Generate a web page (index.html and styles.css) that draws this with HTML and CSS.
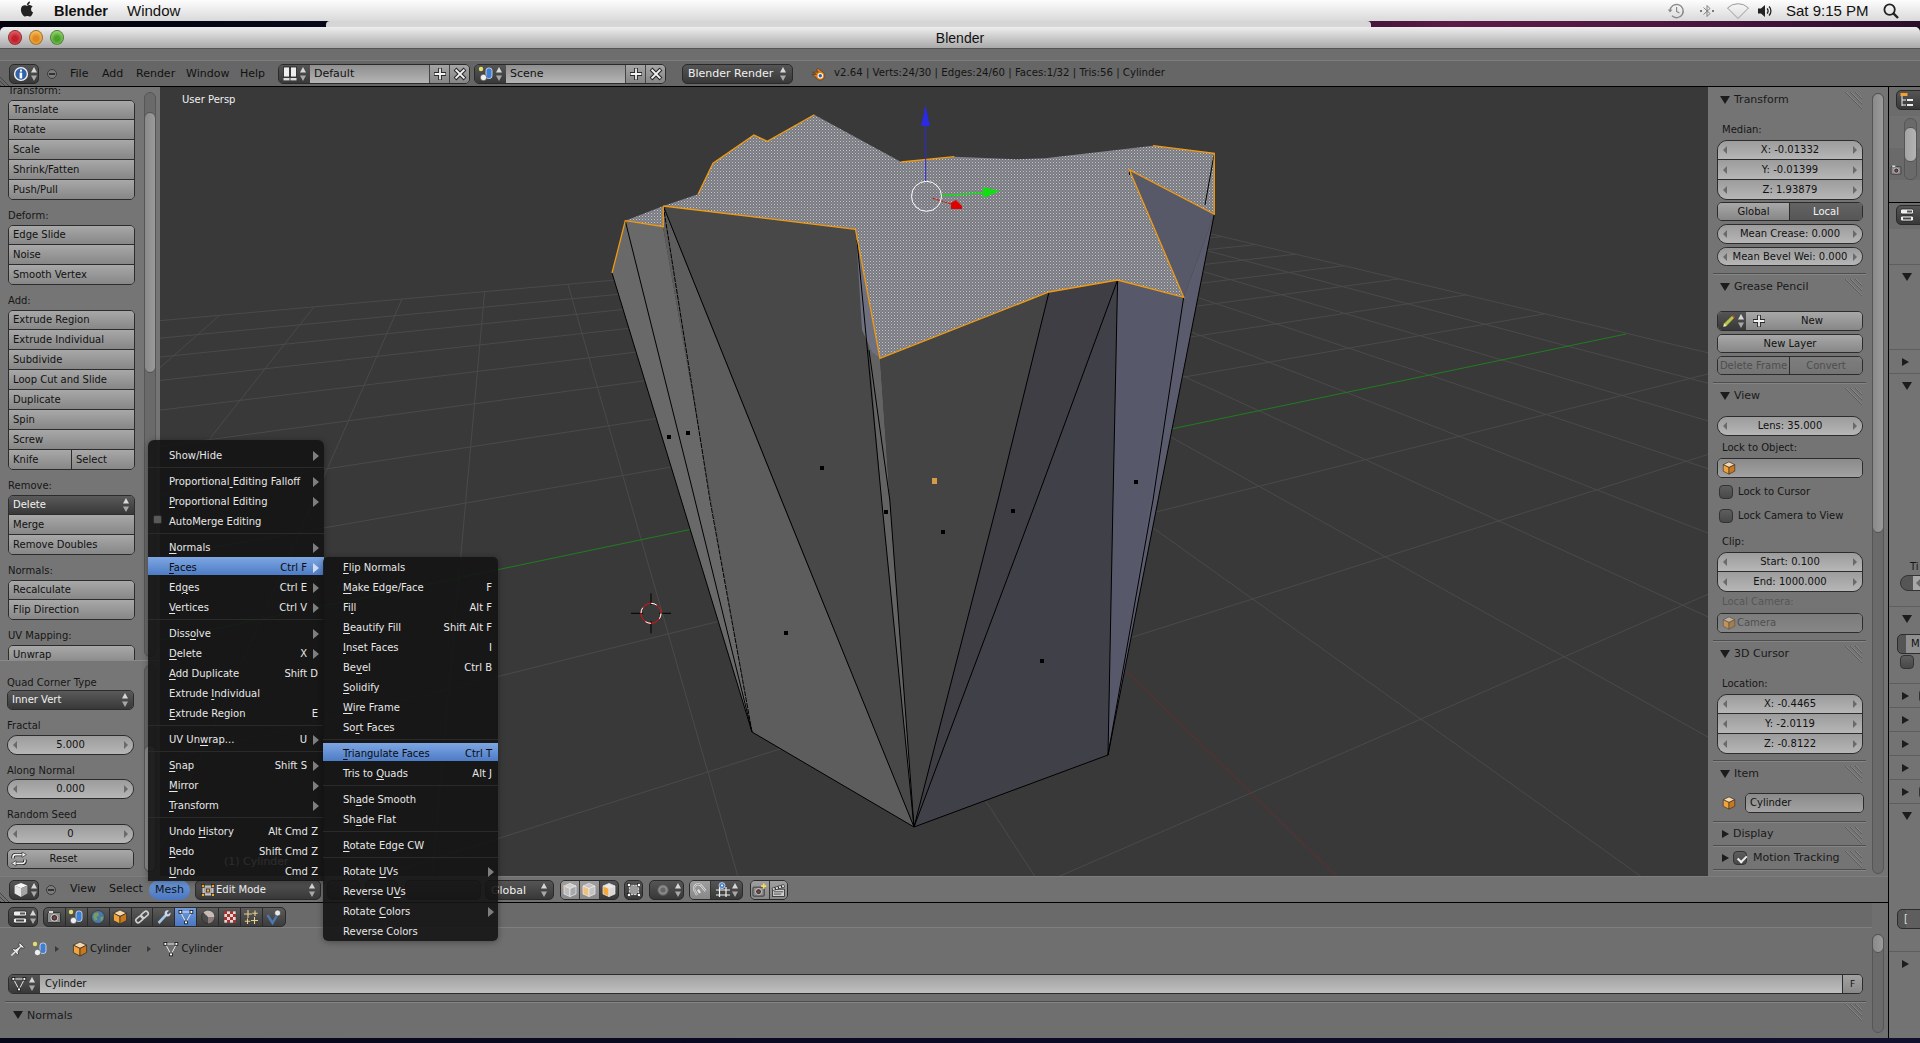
FILE: index.html
```html
<!DOCTYPE html>
<html lang="en">
<head>
<meta charset="utf-8">
<title>Blender</title>
<link rel="stylesheet" href="styles.css">
</head>
<body>
<svg class="defs" width="0" height="0">
  <defs>
    <symbol id="i-arrows" viewBox="0 0 8 16"><polygon points="4,1 7,6.5 1,6.5" fill="#d8d8d8"/><polygon points="4,15 7,9.5 1,9.5" fill="#a8a8a8"/></symbol>
    <symbol id="i-info" viewBox="0 0 16 16"><circle cx="8" cy="8" r="6.4" fill="#2f62a8" stroke="#f2f2f2" stroke-width="1.4"/><rect x="7" y="3.6" width="2" height="2" fill="#fff"/><rect x="6.6" y="6.6" width="2.6" height="5.8" fill="#fff"/></symbol>
    <symbol id="i-layout" viewBox="0 0 16 16"><rect x="1.5" y="1" width="6" height="10" fill="#eee" stroke="#222" stroke-width=".8"/><rect x="8.5" y="1" width="6" height="10" fill="#eee" stroke="#222" stroke-width=".8"/><rect x="1.5" y="12" width="6" height="2.4" fill="#ddd"/><rect x="8.5" y="12" width="6" height="2.4" fill="#ddd"/></symbol>
    <symbol id="i-scene" viewBox="0 0 16 16"><circle cx="3" cy="3" r="2.2" fill="#e6e06a"/><rect x="8" y="2" width="6" height="10.5" rx="2.6" fill="#3f7ed0" stroke="#dfe8f5" stroke-width=".8"/><circle cx="5.5" cy="11.5" r="3.2" fill="#f0f0f0" stroke="#333" stroke-width=".6"/></symbol>
    <symbol id="i-plus" viewBox="0 0 16 16"><path d="M8 2V14M2 8H14" stroke="#2a2a2a" stroke-width="3.8" fill="none"/><path d="M8 2.6V13.4M2.6 8H13.4" stroke="#f2f2f2" stroke-width="1.8" fill="none"/></symbol>
    <symbol id="i-x" viewBox="0 0 16 16"><path d="M3 3L13 13M13 3L3 13" stroke="#2a2a2a" stroke-width="4" fill="none"/><path d="M3.6 3.6L12.4 12.4M12.4 3.6L3.6 12.4" stroke="#f2f2f2" stroke-width="2" fill="none"/></symbol>
    <symbol id="i-blender" viewBox="0 0 16 16"><path d="M7 2.5L13 7A4.6 4.6 0 1 1 4.8 11L1 8.4H5.5L1.8 6.2H7.2L5.5 3.4Z" fill="#e87d0d" stroke="#3a2a1a" stroke-width=".5"/><circle cx="9.3" cy="9.7" r="2.8" fill="#f4f4f4"/><circle cx="9.3" cy="9.7" r="1.7" fill="#2f62a8"/></symbol>
    <symbol id="i-cube" viewBox="0 0 16 16"><g stroke="#2a2a2a" stroke-width=".7" stroke-linejoin="round"><polygon points="8,1 14.6,4.2 8,7.4 1.4,4.2" fill="#f9d6a8"/><polygon points="1.4,4.2 8,7.4 8,15 1.4,11.6" fill="#f2a33a"/><polygon points="14.6,4.2 8,7.4 8,15 14.6,11.6" fill="#c9781d"/></g></symbol>
    <symbol id="i-mesh" viewBox="0 0 16 16"><polygon points="2.5,3 13.5,3 8,13.6" fill="none" stroke="#e8e8e8" stroke-width="1"/><g fill="#fff" stroke="#111" stroke-width=".8"><rect x="1" y="1.5" width="2.8" height="2.8"/><rect x="12" y="1.5" width="2.8" height="2.8"/><rect x="6.6" y="12" width="2.8" height="2.8"/></g></symbol>
    <symbol id="i-props" viewBox="0 0 16 16"><rect x="1.5" y="2" width="13" height="5" rx="1.5" fill="#eee" stroke="#222" stroke-width=".8"/><rect x="8" y="3.5" width="5" height="2" fill="#555"/><rect x="1.5" y="9" width="13" height="5" rx="1.5" fill="#eee" stroke="#222" stroke-width=".8"/><rect x="4" y="10.5" width="8" height="2" fill="#444"/></symbol>
    <symbol id="i-outliner" viewBox="0 0 16 16"><rect x="1.5" y="1" width="7" height="3" fill="#f3a030"/><path d="M3 4V14M3 8H7M3 13H7" stroke="#eee" fill="none"/><rect x="8" y="7" width="6" height="2" fill="#eee"/><rect x="8" y="12" width="6" height="2" fill="#eee"/></symbol>
    <symbol id="i-cam" viewBox="0 0 16 16"><rect x="1.5" y="3.6" width="13" height="10" rx="1" fill="#8c8c8c" stroke="#222" stroke-width=".8"/><rect x="3" y="2" width="4" height="2" fill="#ddd"/><circle cx="8.4" cy="8.8" r="3.4" fill="#3a3a3a" stroke="#ddd" stroke-width=".9"/><circle cx="8.4" cy="8.8" r="1.2" fill="#b33"/></symbol>
    <symbol id="i-world" viewBox="0 0 16 16"><circle cx="8" cy="8" r="6.5" fill="#4a78a8" stroke="#333" stroke-width=".7"/><path d="M4 4.5L8 3.2L9 6L6.5 8L7.5 11L5 11.5L3 8Z" fill="#7c9c5c"/><path d="M10.5 8L13.4 7.8L12.6 11L10.6 12Z" fill="#7c9c5c"/></symbol>
    <symbol id="i-link" viewBox="0 0 16 16"><g fill="none" stroke="#d0d0d0" stroke-width="1.6"><rect x="1.5" y="8" width="8" height="4.6" rx="2.3" transform="rotate(-40 5.5 10.3)"/><rect x="6.6" y="3.4" width="8" height="4.6" rx="2.3" transform="rotate(-40 10.6 5.7)"/></g></symbol>
    <symbol id="i-wrench" viewBox="0 0 16 16"><path d="M2.6 14L9.6 6.4" stroke="#a6c6e8" stroke-width="2.6" fill="none"/><path d="M9 7.2L8.6 4A3 3 0 0 1 13 1.6L10.8 4L12 5.4L14.4 3.4A3 3 0 0 1 12 7.4Z" fill="#c8d8ea"/></symbol>
    <symbol id="i-material" viewBox="0 0 16 16"><circle cx="8" cy="8" r="6.4" fill="#4a4a4a" stroke="#2a2a2a" stroke-width=".7"/><path d="M3.4 3.6A6.4 6.4 0 0 1 14.4 8L8 8Z" fill="#c9bcb6"/><path d="M14.4 8A6.4 6.4 0 0 1 8 14.4L8 8Z" fill="#8a7c78"/></symbol>
    <symbol id="i-texture" viewBox="0 0 16 16"><rect x="2" y="2" width="12" height="12" fill="#e2d6d6" stroke="#444" stroke-width=".6"/><path d="M2 2h3v3H2zM8 2h3v3H8zM5 5h3v3H5zM11 5h3v3h-3zM2 8h3v3H2zM8 8h3v3H8zM5 11h3v3H5zM11 11h3v3h-3z" fill="#a8322e"/></symbol>
    <symbol id="i-particles" viewBox="0 0 16 16"><g stroke="#e8cf8a" stroke-width="1.1" fill="none"><path d="M5 1V9M1 5H9"/><path d="M12 1.5V7M9.3 4.2H14.7"/><path d="M4.5 9.5V15M1.8 12.2H7.2"/><path d="M11.5 8V15M8 11.5H15"/></g></symbol>
    <symbol id="i-physics" viewBox="0 0 16 16"><path d="M1.5 6L6.5 14L13 3" fill="none" stroke="#4a78b0" stroke-width="2.4"/><circle cx="11.6" cy="4" r="3" fill="#e8e8e8" stroke="#333" stroke-width=".6"/></symbol>
    <symbol id="i-pin" viewBox="0 0 16 16"><path d="M9.6 1.5L14.5 6.4L13 7.2L10.8 6.6L8 10.8L8.6 13L7.4 13.8L2.4 8.8L3.2 7.6L5.4 8.2L9.4 5.4L8.8 3.2Z" fill="#e8e8e8" stroke="#222" stroke-width=".7"/><path d="M5 11L1.4 14.6" stroke="#e8e8e8" stroke-width="1.4"/></symbol>
    <symbol id="i-pencil" viewBox="0 0 16 16"><path d="M1.4 14.6L2.4 10.6L11.4 1.8L14.2 4.6L5.4 13.6Z" fill="#b8c64a" stroke="#333" stroke-width=".6"/><path d="M11.4 1.8L14.2 4.6L15 3.6L12.6 1Z" fill="#e03a2a"/><path d="M1.4 14.6L2.4 10.6L5.4 13.6Z" fill="#f3e6c0"/></symbol>
    <symbol id="i-view3d" viewBox="0 0 16 16"><polygon points="8,1 14.4,3.6 8,6.2 1.6,3.6" fill="#f6f6f6"/><polygon points="1.6,3.6 8,6.2 8,15 1.6,11.6" fill="#e4e4e4"/><polygon points="14.4,3.6 8,6.2 8,15 14.4,11.6" fill="#a4a4a4"/></symbol>
    <symbol id="i-edit" viewBox="0 0 16 16"><polygon points="3,4 13,4 13,13 3,13" fill="#a8a8a8" stroke="#eee" stroke-width=".8"/><g fill="#f6a93a" stroke="#222" stroke-width=".7"><rect x="1.5" y="2.5" width="3" height="3"/><rect x="11.5" y="2.5" width="3" height="3"/><rect x="1.5" y="11.5" width="3" height="3"/><rect x="11.5" y="11.5" width="3" height="3"/><rect x="6.5" y="7" width="3" height="3"/></g></symbol>
    <symbol id="i-refresh" viewBox="0 0 16 16"><g fill="none" stroke="#222" stroke-width="3.4"><path d="M2 7.4V6A2.6 2.6 0 0 1 4.6 3.6H12.4"/><path d="M14 8.6V10A2.6 2.6 0 0 1 11.4 12.4H3.6"/></g><g fill="none" stroke="#f0f0f0" stroke-width="1.6"><path d="M2 7.4V6A2.6 2.6 0 0 1 4.6 3.6H12"/><path d="M14 8.6V10A2.6 2.6 0 0 1 11.4 12.4H4"/></g><polygon points="11,1 15.4,3.6 11,6.4" fill="#f0f0f0" stroke="#222" stroke-width=".6"/><polygon points="5,9.6 .6,12.4 5,15" fill="#f0f0f0" stroke="#222" stroke-width=".6"/></symbol>
    <symbol id="i-shade1" viewBox="0 0 16 16"><g fill="#cfcfcf" stroke="#eee" stroke-width=".7"><polygon points="8,1.4 14,4 8,6.6 2,4"/><polygon points="2,4 8,6.6 8,14.6 2,12" fill="#bdbdbd"/><polygon points="14,4 8,6.6 8,14.6 14,12" fill="#a8a8a8"/></g><rect x="1.4" y="3" width="2" height="2" fill="#f0c080"/></symbol>
    <symbol id="i-shade2" viewBox="0 0 16 16"><g fill="#c4c4c4" stroke="#eee" stroke-width=".7"><polygon points="8,1.4 14,4 8,6.6 2,4"/><polygon points="2,4 8,6.6 8,14.6 2,12" fill="#f0c080"/><polygon points="14,4 8,6.6 8,14.6 14,12"/></g></symbol>
    <symbol id="i-shade3" viewBox="0 0 16 16"><g stroke="#eee" stroke-width=".7"><polygon points="8,1.4 14,4 8,6.6 2,4" fill="#e8e8e8"/><polygon points="2,4 8,6.6 8,14.6 2,12" fill="#f6a93a"/><polygon points="14,4 8,6.6 8,14.6 14,12" fill="#d8d8d8"/></g></symbol>
    <symbol id="i-selbox" viewBox="0 0 16 16"><rect x="3.4" y="3.4" width="9.2" height="9.2" fill="#9a9a9a" stroke="#eee" stroke-width=".8" stroke-dasharray="2 1"/><g fill="#fff" stroke="#111" stroke-width=".6"><rect x="1.5" y="1.5" width="3" height="3"/><rect x="11.5" y="1.5" width="3" height="3"/><rect x="1.5" y="11.5" width="3" height="3"/><rect x="11.5" y="11.5" width="3" height="3"/></g></symbol>
    <symbol id="i-circ" viewBox="0 0 16 16"><circle cx="8" cy="8" r="5.4" fill="#8a8a8a" stroke="#555" stroke-width="1.2"/><circle cx="8" cy="8" r="2.6" fill="#666"/></symbol>
    <symbol id="i-magnet" viewBox="0 0 16 16"><path d="M5 13L2.8 8.8A4 4 0 0 1 9.6 4L13.6 9M8 11L6 7.6" fill="none" stroke="#e2e2e2" stroke-width="2.2"/><path d="M5 13L2.8 8.8A4 4 0 0 1 9.6 4L13.6 9" fill="none" stroke="#444" stroke-width=".5"/></symbol>
    <symbol id="i-snap" viewBox="0 0 16 16"><path d="M4.5 5V15M11 5V15M1 8H15M1 13H15" stroke="#f2f2f2" stroke-width="1.2" fill="none"/><circle cx="7" cy="3.6" r="3" fill="#3f7ed0" stroke="#eee" stroke-width=".7"/><circle cx="7" cy="3.6" r="1" fill="#fff"/></symbol>
    <symbol id="i-render" viewBox="0 0 16 16"><rect x="1" y="4.4" width="12" height="9.6" rx="1" fill="#8c8c8c" stroke="#222" stroke-width=".8"/><circle cx="7" cy="9.2" r="3.2" fill="#3a3a3a" stroke="#ddd" stroke-width=".9"/><circle cx="7" cy="9.2" r="1.1" fill="#b33"/><path d="M12.5 .6V6M9.8 3.3H15.2" stroke="#f6dc60" stroke-width="1.8"/></symbol>
    <symbol id="i-clap" viewBox="0 0 16 16"><rect x="1.5" y="6.6" width="13" height="7.8" fill="#cfcfcf" stroke="#222" stroke-width=".8"/><path d="M3 9.4H13M3 11.8H11" stroke="#444"/><polygon points="1,5.6 13.6,1.6 14.6,4.4 2,8" fill="#e8e8e8" stroke="#222" stroke-width=".7"/><path d="M4 4.6L5 7.2M7.4 3.6L8.4 6.2M10.8 2.6L11.8 5.2" stroke="#222" stroke-width="1.2"/></symbol>
    <symbol id="i-hatch" viewBox="0 0 17 17"><g fill="none" stroke="#5c5c5c"><path d="M0 0L17 17M5 0L17 12M10 0L17 7"/></g><g fill="none" stroke="#8e8e8e" stroke-width=".7"><path d="M1 0L17 16M6 0L17 11M11 0L17 6"/></g></symbol>
  </defs>
</svg>

<div class="desktop">
  <header class="macbar">
    <svg class="apple" viewBox="0 0 24 24"><path d="M18.71 19.5c-.83 1.24-1.71 2.45-3.05 2.47-1.34.03-1.77-.79-3.29-.79-1.53 0-2 .77-3.27.82-1.31.05-2.3-1.32-3.14-2.53C4.25 17 2.94 12.45 4.7 9.39c.87-1.52 2.43-2.48 4.12-2.51 1.28-.02 2.5.87 3.29.87.78 0 2.26-1.07 3.81-.91.65.03 2.47.26 3.64 1.98-.09.06-2.17 1.28-2.15 3.81.03 3.02 2.65 4.03 2.68 4.04-.03.07-.42 1.44-1.38 2.83M13 3.5c.73-.83 1.94-1.46 2.94-1.5.13 1.17-.34 2.35-1.04 3.19-.69.85-1.83 1.51-2.95 1.42-.15-1.15.41-2.35 1.05-3.11z"/></svg>
    <span class="mac-app">Blender</span>
    <span class="mac-item">Window</span>
    <span class="mac-fill"></span>
    <svg class="mac-ic tm" viewBox="0 0 18 18"><path d="M3 9A6.6 6.6 0 1 1 5 13.8" fill="none" stroke="#8a8a8a" stroke-width="1.4"/><path d="M.8 7.6L3 10.4L5.4 7.8Z" fill="#8a8a8a"/><path d="M9.6 5V9.4L12.4 11" fill="none" stroke="#8a8a8a" stroke-width="1.2"/></svg>
    <svg class="mac-ic bt" viewBox="0 0 18 18"><path d="M5.5 5.5L12 11.5L9 14.5V3.5L12 6.5L5.5 12.5" fill="none" stroke="#777" stroke-width=".9"/><circle cx="3" cy="9" r="1" fill="#555"/><circle cx="15" cy="9" r="1" fill="#555"/></svg>
    <svg class="mac-ic wifi" viewBox="0 0 24 18"><path d="M1.5 6A15 15 0 0 1 22.5 6L12 16.5Z" fill="none" stroke="#9a9a9a" stroke-width="1"/></svg>
    <svg class="mac-ic vol" viewBox="0 0 18 18"><path d="M2 6.5H5L9 3V15L5 11.5H2Z" fill="#222"/><path d="M11 6.5A3.4 3.4 0 0 1 11 11.5M13 4.6A6 6 0 0 1 13 13.4" fill="none" stroke="#222" stroke-width="1.3"/></svg>
    <span class="mac-clock">Sat 9:15 PM</span>
    <svg class="mac-ic search" viewBox="0 0 18 18"><circle cx="7.6" cy="7.6" r="5.2" fill="none" stroke="#222" stroke-width="1.8"/><path d="M11.4 11.4L16 16" stroke="#222" stroke-width="2.4"/></svg>
  </header>

  <div class="wall-strip"><div class="behind"></div></div>

  <main class="window">
    <div class="titlebar">
      <div class="lights"><i class="light red"></i><i class="light amber"></i><i class="light green"></i></div>
      <span class="title">Blender</span>
    </div>
    <div class="topstrip"></div>

    <div class="infohead">
      <div class="pill dark ed-info"><svg class="ic"><use href="#i-info"/></svg><svg class="arr"><use href="#i-arrows"/></svg></div>
      <i class="collapse"></i>
      <nav class="menus">
        <span class="m-file">File</span><span class="m-add">Add</span><span class="m-render">Render</span><span class="m-window">Window</span><span class="m-help">Help</span>
      </nav>
      <div class="idgroup"><div class="idicon"><svg class="ic"><use href="#i-layout"/></svg><svg class="arr"><use href="#i-arrows"/></svg></div><div class="idfield">Default</div><div class="idbtn"><svg class="ic"><use href="#i-plus"/></svg></div><div class="idbtn"><svg class="ic"><use href="#i-x"/></svg></div></div>
      <div class="idgroup second"><div class="idicon"><svg class="ic"><use href="#i-scene"/></svg><svg class="arr"><use href="#i-arrows"/></svg></div><div class="idfield">Scene</div><div class="idbtn"><svg class="ic"><use href="#i-plus"/></svg></div><div class="idbtn"><svg class="ic"><use href="#i-x"/></svg></div></div>
      <div class="pill dark engine"><span>Blender Render</span><svg class="arr"><use href="#i-arrows"/></svg></div>
      <svg class="ic logo"><use href="#i-blender"/></svg>
      <span class="stats">v2.64 | Verts:24/30 | Edges:24/60 | Faces:1/32 | Tris:56 | Cylinder</span>
    </div>

    <div class="work">
      <div class="leftcol">
        <section class="view3d">
          <div class="viewrow">
            <aside class="toolbar">
              <div class="tools">
                <div class="tools-col tools-shift">
                  <div class="lbl">Transform:</div>
                  <div class="grp"><div class="row">Translate</div><div class="row">Rotate</div><div class="row">Scale</div><div class="row">Shrink/Fatten</div><div class="row">Push/Pull</div></div>
                  <div class="lbl">Deform:</div>
                  <div class="grp"><div class="row">Edge Slide</div><div class="row">Noise</div><div class="row">Smooth Vertex</div></div>
                  <div class="lbl">Add:</div>
                  <div class="grp"><div class="row">Extrude Region</div><div class="row">Extrude Individual</div><div class="row">Subdivide</div><div class="row">Loop Cut and Slide</div><div class="row">Duplicate</div><div class="row">Spin</div><div class="row">Screw</div><div class="row split"><span>Knife</span><span>Select</span></div></div>
                  <div class="lbl">Remove:</div>
                  <div class="grp"><div class="row drop">Delete<svg class="arr"><use href="#i-arrows"/></svg></div><div class="row">Merge</div><div class="row">Remove Doubles</div></div>
                  <div class="lbl">Normals:</div>
                  <div class="grp"><div class="row">Recalculate</div><div class="row">Flip Direction</div></div>
                  <div class="lbl">UV Mapping:</div>
                  <div class="grp"><div class="row">Unwrap</div></div>
                </div>
                <div class="sbar sb-tools"><div class="sb-thumb"></div></div>
              </div>
              <div class="oper">
                <div class="tools-col oper-col">
                  <div class="lbl first">Quad Corner Type</div>
                  <div class="grp"><div class="row drop">Inner Vert<svg class="arr"><use href="#i-arrows"/></svg></div></div>
                  <div class="lbl">Fractal</div>
                  <div class="grp num"><div class="row nrow"><i class="al"></i><span>5.000</span><i class="ar"></i></div></div>
                  <div class="lbl tight">Along Normal</div>
                  <div class="grp num"><div class="row nrow"><i class="al"></i><span>0.000</span><i class="ar"></i></div></div>
                  <div class="lbl">Random Seed</div>
                  <div class="grp num"><div class="row nrow"><i class="al"></i><span>0</span><i class="ar"></i></div></div>
                  <div class="grp reset"><div class="row resetrow"><svg class="ic"><use href="#i-refresh"/></svg><span>Reset</span></div></div>
                </div>
                <div class="sbar sb-oper"><div class="sb-thumb"></div></div>
              </div>
            </aside>

            <div class="viewport">
              <svg class="scene" viewBox="160 87 1548 789" width="1548" height="789">
                <defs>
                  <pattern id="stipple" width="3" height="3" patternUnits="userSpaceOnUse"><rect width="3" height="3" fill="#7a7a82"/><rect width="1" height="1" fill="#c4c4ca"/><rect x="1.5" y="1.5" width="1" height="1" fill="#a8a8ae"/></pattern>
                </defs>
                <g id="grid" fill="none" stroke="#4a4a4a" stroke-width="1"></g>
                <g id="axes" fill="none"></g>
                <!-- faces -->
                <polygon points="612,273 625,221 663,227 752,732" fill="#696969"/>
                <polygon points="663,206 663,227 752,732 914,827 781,500" fill="#5d5d5d"/>
                <polygon points="663,206 855.5,229 880,358 881.6,500 914,827 781,500" fill="#484848"/>
                <polygon points="855.5,229 880,358 889.8,500 914,827 881.6,500 869,350" fill="#636363"/>
                <polygon points="880,358 1049,292 998,500 914,827 889.8,500" fill="#444444"/>
                <polygon points="1049,292 1117.6,280 1036.7,500 914,827 998,500" fill="#3e3e44"/>
                <polygon points="1117.6,280 1113,500 1108,755 914,827 1036.7,500" fill="#404049"/>
                <polygon points="1117.6,280 1183.7,297 1153,500 1108,755 1113,500" fill="#575869"/>
                <polygon points="1183.7,297 1214.3,214.3 1108,755" fill="#5a5b6d"/>
                <polygon points="1129.4,170 1214.3,214.3 1183.7,297" fill="#575868"/>
                <!-- selected top -->
                <polygon points="663.3,206 698,194.3 713,163.3 753.9,135 767.3,141.3 814.3,114.7 901.2,162 954.3,156.7 1016.3,159.3 1044.9,158.3 1153,145.7 1214.3,153.3 1214.3,214.3 1129.4,170 1183.7,297.3 1117.6,280 1049,292 880,358.3 855.5,229.3" fill="url(#stipple)"/>
                <polygon points="625.3,220.7 663.3,206 663.3,226.7" fill="url(#stipple)"/>
                <polygon points="856,232 880,358 872,352 862,330" fill="#6e7080"/>
                <!-- edges -->
                <g fill="none" stroke="#000" stroke-width="1">
                  <path d="M612,273L752,732L914,827L1108,755L1214.3,214"/>
                  <path d="M625.3,221L690,480L752,732"/>
                  <path d="M663.3,206L710,500L752,732" stroke-dasharray="5 1"/>
                  <path d="M663.3,206L781.6,500L914,827"/>
                  <path d="M857,240L881.6,500L914,827"/>
                  <path d="M869,350L889.8,500L914,827"/>
                  <path d="M1049,292L998,500L914,827"/>
                  <path d="M1117.6,280L1036.7,500L914,827"/>
                  <path d="M1117.6,280L1113,500L1108,755"/>
                  <path d="M1183.7,297L1153,500L1108,755"/>
                  <path d="M1214,155L1205,205"/>
                  <path d="M1129.4,170V175"/>
                </g>
                <g fill="none" stroke="#f09a10" stroke-width="1.3">
                  <path d="M663.3,206L855.5,229.3L880,358.3L1049,292L1117.6,280L1183.7,297.3L1129.4,170L1214.3,214.3L1214.3,153.3L1153,145.7"/>
                  <path d="M698,194.3L713,163.3L753.9,135L767.3,141.3L814.3,114.7"/>
                  <path d="M901.2,162L954.3,156.7"/>
                  <path d="M612,273L625.3,220.7L663.3,226.7L663.3,206"/>
                </g>
                <!-- face dots -->
                <g fill="#000">
                  <rect x="667" y="435" width="4" height="4"/><rect x="686" y="431" width="4" height="4"/><rect x="820" y="466" width="4" height="4"/><rect x="1134" y="480" width="4" height="4"/><rect x="884" y="510" width="4" height="4"/><rect x="941" y="530" width="4" height="4"/><rect x="1011" y="509" width="4" height="4"/><rect x="784" y="631" width="4" height="4"/><rect x="1040" y="659" width="4" height="4"/>
                </g>
                <rect x="932" y="478" width="5" height="6" fill="#d69a4c"/>
                <!-- manipulator -->
                <g>
                  <path d="M925.7,126V181" stroke="#2a2ae0" fill="none"/>
                  <polygon points="925.5,105 921,126 930,126" fill="#2a2ae0"/>
                  <path d="M941,195.7L985,192.8" stroke="#10e010" stroke-width="1.4" fill="none"/>
                  <polygon points="983,187 1000,191 983,198" fill="#10e010"/>
                  <path d="M932.7,198.3L951,204" stroke="#e01010" fill="none" stroke-dasharray="3 1"/>
                  <polygon points="951,203 956,200 962,206 962,209 951,209" fill="#e00000"/>
                  <circle cx="926.5" cy="196.3" r="15" fill="none" stroke="#fff"/>
                </g>
                <!-- 3d cursor -->
                <g>
                  <path d="M631,613.3H643M659,613.3H671M651,593.3V605M651,621V633.3" stroke="#000" fill="none"/>
                  <circle cx="651" cy="613.3" r="10" fill="none" stroke="#e01010"/>
                  <circle cx="651" cy="613.3" r="10" fill="none" stroke="#fff" stroke-dasharray="5.7 10"/>
                </g>
              </svg>
              <span class="persp">User Persp</span>
              <span class="objname">(1) Cylinder</span>
            </div>

            <aside class="npanel">
              <div class="np-main">
                <div class="np-sec">
                  <div class="np-head"><i class="tri-d"></i>Transform<svg class="hatch"><use href="#i-hatch"/></svg></div>
                  <div class="np-lbl lb8">Median:</div>
                  <div class="grp num"><div class="row nrow"><i class="al"></i><span>X: -0.01332</span><i class="ar"></i></div><div class="row nrow"><i class="al"></i><span>Y: -0.01399</span><i class="ar"></i></div><div class="row nrow"><i class="al"></i><span>Z: 1.93879</span><i class="ar"></i></div></div>
                  <div class="grp two h19 mt2"><div class="row seg"><span>Global</span><span class="on">Local</span></div></div>
                  <div class="grp num mt3"><div class="row nrow"><i class="al"></i><span>Mean Crease: 0.000</span><i class="ar"></i></div></div>
                  <div class="grp num h19 mt3"><div class="row nrow"><i class="al"></i><span>Mean Bevel Wei: 0.000</span><i class="ar"></i></div></div>
                </div>
                <div class="np-sec s-gp">
                  <div class="np-head"><i class="tri-d"></i>Grease Pencil<svg class="hatch"><use href="#i-hatch"/></svg></div>
                  <div class="grp mt12"><div class="row gp"><span class="gp-ic"><svg class="ic"><use href="#i-pencil"/></svg><svg class="arr"><use href="#i-arrows"/></svg></span><svg class="ic gp-plus"><use href="#i-plus"/></svg><span class="gp-new">New</span></div></div>
                  <div class="grp h19 mt3"><div class="row center">New Layer</div></div>
                  <div class="grp h19 mt3 disabled"><div class="row seg"><span>Delete Frame</span><span>Convert</span></div></div>
                </div>
                <div class="np-sec s-view">
                  <div class="np-head"><i class="tri-d"></i>View<svg class="hatch"><use href="#i-hatch"/></svg></div>
                  <div class="grp num mt8"><div class="row nrow"><i class="al"></i><span>Lens: 35.000</span><i class="ar"></i></div></div>
                  <div class="np-lbl lb3">Lock to Object:</div>
                  <div class="grp field"><div class="row iconrow"><svg class="ic"><use href="#i-cube"/></svg></div></div>
                  <div class="check mt5"><i class="cb"></i>Lock to Cursor</div>
                  <div class="check mt6"><i class="cb"></i>Lock Camera to View</div>
                  <div class="np-lbl lb5">Clip:</div>
                  <div class="grp num"><div class="row nrow"><i class="al"></i><span>Start: 0.100</span><i class="ar"></i></div><div class="row nrow"><i class="al"></i><span>End: 1000.000</span><i class="ar"></i></div></div>
                  <div class="np-lbl dim lb2">Local Camera:</div>
                  <div class="grp field fdim"><div class="row iconrow"><svg class="ic"><use href="#i-cube"/></svg><span>Camera</span></div></div>
                </div>
                <div class="np-sec s-cur">
                  <div class="np-head"><i class="tri-d"></i>3D Cursor<svg class="hatch"><use href="#i-hatch"/></svg></div>
                  <div class="np-lbl lb8">Location:</div>
                  <div class="grp num"><div class="row nrow"><i class="al"></i><span>X: -0.4465</span><i class="ar"></i></div><div class="row nrow"><i class="al"></i><span>Y: -2.0119</span><i class="ar"></i></div><div class="row nrow"><i class="al"></i><span>Z: -0.8122</span><i class="ar"></i></div></div>
                </div>
                <div class="np-sec s-item">
                  <div class="np-head"><i class="tri-d"></i>Item<svg class="hatch"><use href="#i-hatch"/></svg></div>
                  <div class="itemrow"><svg class="ic"><use href="#i-cube"/></svg><div class="grp field"><div class="row">Cylinder</div></div></div>
                </div>
                <div class="np-sec s-col"><div class="np-head h23"><i class="tri-r"></i>Display<svg class="hatch"><use href="#i-hatch"/></svg></div></div>
                <div class="np-sec s-col"><div class="np-head h23"><i class="tri-r"></i><i class="cb on"></i>Motion Tracking<svg class="hatch"><use href="#i-hatch"/></svg></div></div>
                <div class="np-sec"></div>
              </div>
              <div class="sbar sb-n"><div class="sb-thumb"></div></div>
            </aside>
          </div>

          <div class="h3d">
            <div class="pill dark w-ed"><svg class="ic"><use href="#i-view3d"/></svg><svg class="arr"><use href="#i-arrows"/></svg></div>
            <i class="collapse"></i>
            <span class="hm hm-view">View</span>
            <span class="hm hm-select">Select</span>
            <span class="hm hm-mesh">Mesh</span>
            <div class="pill dark w-mode"><svg class="ic"><use href="#i-edit"/></svg><span>Edit Mode</span><svg class="arr"><use href="#i-arrows"/></svg></div>
            <div class="pill dark w-sh1"></div>
            <div class="pill dark w-sh2"></div>
            <div class="pill dark w-manip"></div>
            <div class="pill dark w-orient"><span>Global</span><svg class="arr"><use href="#i-arrows"/></svg></div>
            <div class="pill dark w-shade"><span class="cell lit"><svg class="ic"><use href="#i-shade1"/></svg></span><span class="cell lit"><svg class="ic"><use href="#i-shade2"/></svg></span><span class="cell"><svg class="ic"><use href="#i-shade3"/></svg></span></div>
            <div class="pill dark w-sel"><svg class="ic"><use href="#i-selbox"/></svg></div>
            <div class="pill dark w-prop"><svg class="ic"><use href="#i-circ"/></svg><svg class="arr"><use href="#i-arrows"/></svg></div>
            <div class="pill dark w-snap"><span class="cell lit"><svg class="ic"><use href="#i-magnet"/></svg></span><span class="cell grow"><svg class="ic"><use href="#i-snap"/></svg><svg class="arr"><use href="#i-arrows"/></svg></span></div>
            <div class="pill dark w-rend"><span class="cell lit"><svg class="ic"><use href="#i-render"/></svg></span><span class="cell lit"><svg class="ic"><use href="#i-clap"/></svg></span></div>
          </div>
        </section>

        <section class="props">
          <div class="props-main">
            <div class="p-head">
              <div class="pill dark w-ed"><svg class="ic"><use href="#i-props"/></svg><svg class="arr"><use href="#i-arrows"/></svg></div>
              <div class="tabs">
                <span class="tab"><svg class="ic"><use href="#i-cam"/></svg></span><span class="tab"><svg class="ic"><use href="#i-scene"/></svg></span><span class="tab"><svg class="ic"><use href="#i-world"/></svg></span><span class="tab"><svg class="ic"><use href="#i-cube"/></svg></span><span class="tab"><svg class="ic"><use href="#i-link"/></svg></span><span class="tab"><svg class="ic"><use href="#i-wrench"/></svg></span><span class="tab active"><svg class="ic"><use href="#i-mesh"/></svg></span><span class="tab"><svg class="ic"><use href="#i-material"/></svg></span><span class="tab"><svg class="ic"><use href="#i-texture"/></svg></span><span class="tab"><svg class="ic"><use href="#i-particles"/></svg></span><span class="tab"><svg class="ic"><use href="#i-physics"/></svg></span>
              </div>
            </div>
            <div class="crumbs">
              <svg class="ic"><use href="#i-pin"/></svg>
              <svg class="ic c-scene"><use href="#i-scene"/></svg>
              <i class="crumb-arrow"></i>
              <svg class="ic c-cube"><use href="#i-cube"/></svg>
              <span>Cylinder</span>
              <i class="crumb-arrow a2"></i>
              <svg class="ic c-mesh"><use href="#i-mesh"/></svg>
              <span>Cylinder</span>
            </div>
            <div class="namerow">
              <div class="nm-ic"><svg class="ic"><use href="#i-mesh"/></svg><svg class="arr"><use href="#i-arrows"/></svg></div>
              <div class="nm-field">Cylinder</div>
              <div class="nm-f">F</div>
            </div>
            <div class="p-panel"><i class="tri-d"></i>Normals<svg class="hatch"><use href="#i-hatch"/></svg></div>
          </div>
          <div class="sbar sb-p"><div class="sb-thumb"></div></div>
        </section>
      </div>

      <aside class="rightcol">
        <div class="rc-top">
          <div class="rc-h"><div class="pill dark rc-pill"><svg class="ic"><use href="#i-outliner"/></svg></div></div>
          <div class="rc-list"><svg class="ic rc-cam"><use href="#i-cam"/></svg><div class="sbar sb-rc"><div class="sb-thumb"></div></div></div>
        </div>
        <div class="rc-bottom">
          <div class="rc-h h2"><div class="pill dark rc-pill"><svg class="ic"><use href="#i-props"/></svg></div></div>
          <div class="rc-t mt-a"><i class="tri-d"></i></div>
          <div class="rc-t mt-b"><i class="tri-r"></i></div>
          <div class="rc-t"><i class="tri-d"></i></div>
          <div class="rc-ti">Ti</div>
          <div class="rc-pillrow"><i class="al"></i></div>
          <div class="rc-t mt-c"><i class="tri-d"></i><i class="cb"></i></div>
          <div class="rc-m">M</div>
          <i class="cb rc-cb"></i>
          <div class="rc-t mt-d"><i class="tri-r"></i><i class="cb"></i></div>
          <div class="rc-t"><i class="tri-r"></i></div>
          <div class="rc-t"><i class="tri-r"></i></div>
          <div class="rc-t"><i class="tri-r"></i></div>
          <div class="rc-t"><i class="tri-r"></i><i class="cb"></i></div>
          <div class="rc-t"><i class="tri-d"></i></div>
          <div class="rc-bracket">[</div>
          <div class="rc-t mt-e"><i class="tri-r"></i></div>
        </div>
      </aside>
    </div>
  </main>

  <div class="wall-bottom"></div>

  <div class="menu menu-main">
    <div class="mi arrow"><span>Show/Hide</span></div>
    <div class="msep"></div>
    <div class="mi arrow"><span>Proportional<u> </u>Editing Falloff</span></div>
    <div class="mi arrow"><span><u>P</u>roportional Editing</span></div>
    <div class="mi"><i class="mcheck"></i><span>AutoMerge Editing</span></div>
    <div class="msep"></div>
    <div class="mi arrow"><span><u>N</u>ormals</span></div>
    <div class="mi arrow hl"><span><u>F</u>aces</span><em>Ctrl F</em></div>
    <div class="mi arrow"><span>Ed<u>g</u>es</span><em>Ctrl E</em></div>
    <div class="mi arrow"><span><u>V</u>ertices</span><em>Ctrl V</em></div>
    <div class="msep"></div>
    <div class="mi arrow"><span>Diss<u>o</u>lve</span></div>
    <div class="mi arrow"><span><u>D</u>elete</span><em>X</em></div>
    <div class="mi"><span><u>A</u>dd Duplicate</span><em>Shift D</em></div>
    <div class="mi"><span>Extrude <u>I</u>ndividual</span></div>
    <div class="mi"><span><u>E</u>xtrude Region</span><em>E</em></div>
    <div class="msep"></div>
    <div class="mi arrow"><span>UV Un<u>w</u>rap...</span><em>U</em></div>
    <div class="msep"></div>
    <div class="mi arrow"><span><u>S</u>nap</span><em>Shift S</em></div>
    <div class="mi arrow"><span><u>M</u>irror</span></div>
    <div class="mi arrow"><span><u>T</u>ransform</span></div>
    <div class="msep"></div>
    <div class="mi"><span>Undo <u>H</u>istory</span><em>Alt Cmd Z</em></div>
    <div class="mi"><span><u>R</u>edo</span><em>Shift Cmd Z</em></div>
    <div class="mi"><span><u>U</u>ndo</span><em>Cmd Z</em></div>
  </div>

  <div class="menu menu-sub">
    <div class="mi"><span><u>F</u>lip Normals</span></div>
    <div class="mi"><span><u>M</u>ake Edge/Face</span><em>F</em></div>
    <div class="mi"><span>Fi<u>l</u>l</span><em>Alt F</em></div>
    <div class="mi"><span><u>B</u>eautify Fill</span><em>Shift Alt F</em></div>
    <div class="mi"><span><u>I</u>nset Faces</span><em>I</em></div>
    <div class="mi"><span>Be<u>v</u>el</span><em>Ctrl B</em></div>
    <div class="mi"><span><u>S</u>olidify</span></div>
    <div class="mi"><span><u>W</u>ire Frame</span></div>
    <div class="mi"><span>So<u>r</u>t Faces</span></div>
    <div class="msep"></div>
    <div class="mi hl"><span><u>T</u>riangulate Faces</span><em>Ctrl T</em></div>
    <div class="mi"><span>Tris to <u>Q</u>uads</span><em>Alt J</em></div>
    <div class="msep"></div>
    <div class="mi"><span>Sh<u>a</u>de Smooth</span></div>
    <div class="mi"><span>Sh<u>a</u>de Flat</span></div>
    <div class="msep"></div>
    <div class="mi"><span><u>R</u>otate Edge CW</span></div>
    <div class="msep"></div>
    <div class="mi arrow"><span>Rotate <u>U</u>Vs</span></div>
    <div class="mi"><span>Reverse U<u>V</u>s</span></div>
    <div class="mi arrow"><span>Rotate <u>C</u>olors</span></div>
    <div class="mi"><span>Reverse Colors</span></div>
  </div>
</div>
<script src="grid.js"></script>
</body>
</html>
```
FILE: styles.css
```css
* { box-sizing: border-box; }
html, body { margin: 0; padding: 0; width: 1920px; height: 1043px; overflow: hidden; background: #07091c; }
body { font: 10px/1 "DejaVu Sans", sans-serif; color: #111; }
.defs { position: absolute; }
i, em { font-style: normal; display: block; flex: none; }
svg { display: block; flex: none; }
u { text-decoration-thickness: 1px; text-underline-offset: 2px; }

.desktop { position: relative; width: 1920px; height: 1043px; display: flex; flex-direction: column; }

/* Mac bar */
.macbar { height: 21px; flex: none; display: flex; align-items: center; background: linear-gradient(#fdfdfd, #d9d9d9); font: 15px "Liberation Sans", sans-serif; color: #111; }
.apple { width: 18px; height: 18px; margin-left: 18px; fill: #222; margin-top: -3px; }
.mac-app { font-weight: 700; font-size: 14.5px; margin-left: 18px; }
.mac-item { margin-left: 19px; }
.mac-fill { flex: 1; }
.mac-ic { width: 18px; height: 18px; margin-right: 12px; }
.mac-ic.tm { margin-right: 13px; }
.mac-ic.bt { margin-right: 10px; }
.mac-ic.wifi { width: 24px; margin-right: 6px; }
.mac-ic.vol { margin-right: 12px; }
.mac-clock { width: 82px; margin-right: 14px; white-space: nowrap; }
.mac-ic.search { margin-right: 20px; }

.wall-strip { height: 6px; flex: none; background: linear-gradient(90deg, #02030c 0, #07081a 320px, #1a0a22 1200px, #5c1b48 1450px, #4a1640 1700px, #2a0e2c 1920px); position: relative; overflow: hidden; }
.behind { margin-left: 326px; width: 1045px; height: 6px; background: #d6d6d6; border-radius: 4px 4px 0 0; }

/* Window */
.window { height: 1011px; flex: none; display: flex; flex-direction: column; border-radius: 5px 5px 0 0; overflow: hidden; background: #6e6e6e; }
.titlebar { height: 22px; flex: none; position: relative; display: flex; align-items: center; justify-content: center; background: linear-gradient(#eeeeee, #a9a9a9); border-bottom: 1px solid #545454; font: 14px "Liberation Sans", sans-serif; color: #111; }
.lights { position: absolute; left: 8px; top: 3px; display: flex; gap: 7px; }
.light { width: 14px; height: 15px; border-radius: 50%; border: 1px solid rgba(0,0,0,.35); }
.red { background: radial-gradient(circle at 50% 60%, #c0202a 25%, #f07078 90%); }
.amber { background: radial-gradient(circle at 50% 60%, #e08820 25%, #ffd070 90%); }
.green { background: radial-gradient(circle at 50% 60%, #4aa02a 25%, #a8e880 90%); }
.topstrip { height: 12px; flex: none; background: #6e6e6e; border-bottom: 1px solid #7d7d7d; }

/* Generic header widgets */
.ic { width: 16px; height: 16px; }
.arr { width: 8px; height: 16px; }
.pill { height: 20px; border-radius: 5px; border: 1px solid #2a2a2a; display: flex; align-items: center; flex: none; overflow: hidden; }
.pill.dark { background: linear-gradient(#555, #383838); color: #f0f0f0; }
.collapse { width: 10px; height: 10px; border-radius: 50%; border: 1px solid #3a3a3a; background: #7c7c7c; position: relative; }
.collapse::after { content: ""; position: absolute; left: 1px; right: 1px; top: 3px; height: 2px; background: #333; }

.infohead { height: 26px; flex: none; display: flex; align-items: center; background: #666; border-bottom: 1px solid #000; position: relative; }
.infohead::before, .h3d::before { content: ""; position: absolute; left: 0; bottom: 0; width: 10px; height: 12px; background: repeating-linear-gradient(45deg, #444 0 1px, transparent 1px 3px); clip-path: polygon(0 0, 100% 100%, 0 100%); }
.ed-info { width: 30px; margin-left: 9px; padding-left: 3px; gap: 1px; }
.infohead .collapse { margin-left: 8px; }
.menus { display: flex; margin-left: 13px; color: #111; font-size: 11px; }
.m-file { width: 32px; }
.m-add { width: 34px; }
.m-render { width: 50px; }
.m-window { width: 54px; }
.m-help { width: 38px; }
.idgroup { display: flex; height: 20px; width: 192px; border: 1px solid #2a2a2a; border-radius: 5px; overflow: hidden; flex: none; }
.idgroup.second { margin-left: 4px; }
.idicon { width: 31px; display: flex; align-items: center; padding-left: 3px; gap: 1px; background: linear-gradient(#555, #383838); }
.idfield { flex: 1; background: linear-gradient(#8f8f8f, #b4b4b4); display: flex; align-items: center; padding-left: 4px; font-size: 11px; }
.idbtn { width: 20px; background: linear-gradient(#a4a4a4, #868686); display: flex; align-items: center; justify-content: center; border-left: 1px solid #444; }
.engine { width: 111px; margin-left: 16px; padding: 0 5px; justify-content: space-between; font-size: 11px; }
.logo { margin-left: 18px; }
.stats { margin-left: 7px; font-size: 10.2px; color: #141414; white-space: nowrap; }

/* Work */
.work { flex: 1; display: flex; min-height: 0; }
.leftcol { width: 1889px; flex: none; display: flex; flex-direction: column; border-right: 1px solid #000; }
.view3d { height: 816px; flex: none; display: flex; flex-direction: column; border-bottom: 1px solid #000; }
.viewrow { height: 789px; flex: none; display: flex; }

/* Toolbar */
.toolbar { width: 160px; flex: none; display: flex; flex-direction: column; background: #757575; }
.tools { height: 573px; flex: none; display: flex; overflow: hidden; }
.oper { height: 216px; flex: none; display: flex; border-top: 1px solid #8b8b8b; background: #767676; }
.tools-col { width: 143px; flex: none; padding-left: 8px; padding-right: 8px; }
.tools-shift { margin-top: -12px; }
.oper-col { padding-left: 7px; padding-right: 9px; padding-top: 14px; }
.lbl { height: 25px; padding-top: 8px; line-height: 16px; color: #161616; white-space: nowrap; }
.lbl.first { height: 15px; padding-top: 0; }
.lbl.tight { height: 24px; }
.sbar { flex: none; position: relative; }
.sbar::before { content: ""; position: absolute; inset: 0; border: 1px solid #565656; background: #6a6a6a; border-radius: 6px; }
.sb-thumb { position: absolute; left: 0; right: 0; border: 1px solid #555; border-radius: 6px; background: linear-gradient(90deg, #8a8a8a, #9a9a9a); }
.sb-tools { width: 12px; height: 565px; margin-top: 5px; margin-left: 1px; }
.sb-tools .sb-thumb { top: 20px; height: 261px; }
.sb-oper { width: 12px; height: 207px; margin-top: 4px; margin-left: 1px; }
.sb-oper .sb-thumb { top: 80px; bottom: 0; }

/* Groups & rows */
.grp { border: 1px solid #2c2c2c; border-radius: 5px; overflow: hidden; }
.row { height: 20px; display: flex; align-items: center; padding-left: 4px; background: linear-gradient(#a8a8a8, #878787); border-bottom: 1px solid #2c2c2c; white-space: nowrap; }
.row:first-child { height: 19px; }
.row:last-child { height: 19px; border-bottom: 0; }
.row:only-child { height: 18px; }
.h19 .row:only-child { height: 17px; }
.split { padding: 0; }
.split span { width: 62px; padding-left: 4px; height: 100%; display: flex; align-items: center; }
.split span + span { flex: 1; border-left: 1px solid #2c2c2c; }
.drop { background: linear-gradient(#5a5a5a, #383838); color: #f2f2f2; justify-content: space-between; padding-right: 4px; }
.num { border-radius: 10px; }
.nrow { background: linear-gradient(#9c9c9c, #b6b6b6); padding: 0 5px; justify-content: space-between; color: #111; }
.al, .ar { width: 0; height: 0; border-block: 4px solid transparent; }
.al { border-right: 4px solid #6a6a6a; }
.ar { border-left: 4px solid #6a6a6a; }
.reset { margin-top: 5px; }
.resetrow { position: relative; justify-content: center; padding: 0 14px 0 0; }
.resetrow .ic { position: absolute; left: 3px; }

/* Viewport */
.viewport { flex: 1; position: relative; background: #393939; overflow: hidden; min-width: 0; }
.scene { position: absolute; left: 0; top: 0; }
.persp { position: absolute; left: 22px; top: 8px; color: #f0f0f0; font-size: 10px; }
.objname { position: absolute; left: 64px; top: 769px; color: #fff; font-size: 11px; }

/* N panel */
.npanel { width: 180px; flex: none; display: flex; background: #747474; }
.np-main { width: 163px; flex: none; overflow: hidden; padding-left: 5px; }
.np-sec { border-bottom: 1px solid #4e4e4e; box-shadow: 0 1px 0 #858585; padding-left: 4px; width: 153px; }
.np-sec:last-child { border: 0; box-shadow: none; }
.np-sec > .grp { width: 146px; }
.np-sec:first-child { padding-bottom: 7px; }
.np-head { height: 25px; display: flex; align-items: center; font-size: 11px; color: #1a1a1a; position: relative; white-space: nowrap; }
.np-head.h23 { height: 23px; }
.np-head .hatch { position: absolute; right: 4px; top: 5px; }
.hatch { width: 17px; height: 17px; }
.tri-d { width: 0; height: 0; border-inline: 5px solid transparent; border-top: 8px solid #1c1c1c; margin-left: 3px; margin-right: 4px; }
.tri-r { width: 0; height: 0; border-block: 4px solid transparent; border-left: 7px solid #1c1c1c; margin-left: 5px; margin-right: 4px; }
.np-lbl { height: 20px; line-height: 20px; padding-left: 5px; color: #161616; white-space: nowrap; }
.np-lbl.dim { color: #565656; }
.lb8 { margin-top: 8px; }
.lb5 { height: 10px; line-height: 10px; margin-top: 12px; margin-bottom: 5px; }
.lb3 { margin-top: 2px; }
.lb2 { margin-top: 0; margin-bottom: 1px; }
.mt2 { margin-top: 2px; }
.mt3 { margin-top: 3px; }
.mt5 { margin-top: 5px; }
.mt6 { margin-top: 6px; }
.mt8 { margin-top: 8px; }
.mt12 { margin-top: 12px; }
.s-gp { padding-bottom: 7px; }
.s-view { padding-bottom: 7px; }
.s-cur { padding-bottom: 6px; }
.s-item { padding-bottom: 8px; }
.seg { padding: 0; }
.seg span { width: 71px; height: 100%; display: flex; align-items: center; justify-content: center; }
.seg span + span { flex: 1; border-left: 1px solid #2c2c2c; }
.seg .on { background: linear-gradient(#636363, #565656); color: #f4f4f4; }
.gp { padding: 0; }
.gp-ic { width: 28px; height: 100%; background: linear-gradient(#555, #383838); display: flex; align-items: center; padding-left: 4px; gap: 1px; }
.gp-ic .ic { width: 14px; height: 14px; }
.gp-plus { margin-left: 5px; }
.gp-new { margin-left: 34px; }
.center { justify-content: center; padding: 0; }
.disabled .row { color: #4e4e4e; background: linear-gradient(#7e7e7e, #747474); }
.field .row { background: linear-gradient(#8a8a8a, #a2a2a2); padding-left: 4px; }
.iconrow .ic { width: 14px; height: 14px; margin-right: 1px; }
.fdim .row { background: linear-gradient(#7c7c7c, #868686); color: #4f4f4f; }
.fdim .ic { opacity: .55; }
.check { height: 18px; display: flex; align-items: center; padding-left: 2px; gap: 5px; color: #161616; white-space: nowrap; }
.cb { width: 14px; height: 14px; border-radius: 4px; border: 1px solid #333; background: linear-gradient(#5e5e5e, #484848); position: relative; }
.cb.on { margin-right: 6px; }
.cb.on::after { content: ""; position: absolute; left: 3px; top: 1px; width: 7px; height: 4px; border-left: 2px solid #eee; border-bottom: 2px solid #eee; transform: rotate(-45deg) translate(-1px, 2px); }
.itemrow { display: flex; align-items: center; margin-top: 7px; padding-left: 5px; }
.itemrow .ic { width: 14px; height: 14px; }
.itemrow .grp { width: 119px; margin-left: 9px; }
.sb-n { width: 12px; height: 781px; margin-top: 6px; margin-left: 1px; }
.sb-n .sb-thumb { top: 0; height: 440px; }

/* 3D header */
.h3d { height: 26px; flex: none; display: flex; align-items: flex-start; padding-top: 3px; background: #717171; position: relative; border-top: 1px solid #7d7d7d; padding-left: 9px; }
.w-ed { width: 30px; padding-left: 3px; gap: 1px; }
.h3d .collapse { margin: 5px 0 0 7px; }
.hm { line-height: 18px; font-size: 11px; color: #111; }
.hm-view { margin-left: 14px; width: 39px; }
.hm-select { width: 40px; }
.hm-mesh { width: 41px; height: 20px; line-height: 19px; text-align: center; background: linear-gradient(#6f9bdc, #4a76c0); border-radius: 10px; }
.w-mode { width: 126px; margin-left: 5px; padding: 0 4px; gap: 0; font-size: 10px; }
.w-mode span { flex: 1; }
.w-sh1 { width: 33px; margin-left: 6px; }
.w-sh2 { width: 33px; margin-left: 5px; }
.w-manip { width: 76px; margin-left: 7px; }
.w-orient { width: 69px; margin-left: 4px; padding: 0 5px; justify-content: space-between; font-size: 11px; }
.w-shade { width: 59px; margin-left: 6px; }
.cell { flex: 1; height: 100%; display: flex; align-items: center; justify-content: center; border-right: 1px solid #333; }
.cell:last-child { border-right: 0; }
.cell.lit { background: linear-gradient(#9e9e9e, #888); }
.w-sel { width: 19px; margin-left: 5px; justify-content: center; }
.w-prop { width: 35px; margin-left: 6px; padding-left: 5px; gap: 3px; }
.w-snap { width: 54px; margin-left: 5px; }
.w-snap .cell.lit { flex: none; width: 21px; }
.w-rend { width: 38px; margin-left: 7px; }
.w-rend .ic { width: 15px; height: 15px; }

/* Properties */
.props { flex: 1; display: flex; background: #6f6f6f; min-height: 0; }
.props-main { width: 1872px; flex: none; }
.p-head { height: 25px; display: flex; align-items: flex-start; padding: 4px 0 0 8px; border-bottom: 1px solid #7f7f7f; background: #6a6a6a; }
.tabs { display: flex; margin-left: 5px; height: 20px; border: 1px solid #2a2a2a; border-radius: 5px; overflow: hidden; background: linear-gradient(#5a5a5a, #3c3c3c); }
.tab { width: 21.9px; display: flex; align-items: center; justify-content: center; border-right: 1px solid #2a2a2a; }
.tab:last-child { border: 0; }
.tab.active { background: linear-gradient(#6f9bdc, #4a76c0); }
.crumbs { height: 46px; display: flex; align-items: center; padding-left: 10px; font-size: 10px; color: #141414; padding-bottom: 5px; }
.c-scene { margin-left: 6px; }
.crumb-arrow { width: 0; height: 0; border-block: 3px solid transparent; border-left: 4px solid #3a3a3a; margin-left: 7px; }
.c-cube { margin-left: 13px; }
.crumb-arrow.a2 { margin-left: 16px; }
.c-mesh { margin-left: 12px; }
.crumbs span { margin-left: 2px; }
.namerow { margin-left: 8px; width: 1855px; height: 20px; display: flex; border: 1px solid #2c2c2c; border-radius: 5px; overflow: hidden; }
.nm-ic { width: 31px; background: linear-gradient(#555, #383838); display: flex; align-items: center; padding-left: 2px; gap: 1px; flex: none; }
.nm-field { flex: 1; background: linear-gradient(#a0a0a0, #c0c0c0); display: flex; align-items: center; padding-left: 5px; }
.nm-f { width: 20px; flex: none; border-left: 1px solid #2c2c2c; background: linear-gradient(#a2a2a2, #888); display: flex; align-items: center; justify-content: center; font-size: 9px; }
.p-panel { margin: 7px 0 0 5px; width: 1861px; border-top: 1px solid #4e4e4e; box-shadow: inset 0 1px 0 #858585; height: 27px; display: flex; align-items: center; font-size: 11px; position: relative; padding-left: 5px; color: #1a1a1a; }
.p-panel .hatch { position: absolute; right: 4px; top: 2px; }
.sb-p { width: 12px; height: 99px; margin-top: 31px; }
.sb-p .sb-thumb { top: 0; height: 19px; }

/* Right column */
.rightcol { flex: 1; min-width: 0; display: flex; flex-direction: column; background: #737373; overflow: hidden; }
.rc-top { height: 116px; flex: none; border-bottom: 1px solid #000; display: flex; flex-direction: column; }
.rc-h { height: 29px; flex: none; padding: 3px 0 0 7px; background: #6c6c6c; }
.rc-pill { width: 36px; padding-left: 2px; }
.rc-list { flex: 1; display: flex; align-items: flex-start; position: relative; background: repeating-linear-gradient(#707070 0 32px, #6a6a6a 32px 64px); }
.rc-cam { margin: 48px 0 0 1px; width: 12px; height: 12px; }
.sb-rc { width: 13px; height: 62px; margin-top: 2px; margin-left: 2px; }
.sb-rc .sb-thumb { top: 9px; height: 35px; background: linear-gradient(90deg, #a4a4a4, #b4b4b4); }
.rc-bottom { flex: 1; display: flex; flex-direction: column; }
.rc-h.h2 { height: 26px; padding-top: 2px; }
.rc-t { height: 24px; display: flex; align-items: center; padding-left: 9px; gap: 3px; border-top: 1px solid #5e5e5e; }
.rc-t .tri-d, .rc-t .tri-r { margin-left: 4px; }
.rc-t .cb { margin-left: 3px; }
.mt-a { margin-top: 35px; }
.mt-b { margin-top: 61px; }
.mt-c { margin-top: 15px; }
.mt-d { margin-top: 14px; }
.mt-e { margin-top: 22px; }
.rc-ti { margin: 164px 0 0 21px; height: 12px; line-height: 12px; color: #161616; }
.rc-pillrow { margin: 2px 0 0 11px; height: 16px; width: 40px; border: 1px solid #333; border-radius: 8px; background: linear-gradient(90deg, #555 0 12px, #a8a8a8 12px); display: flex; align-items: center; padding-left: 15px; }
.rc-m { margin: 4px 0 0 8px; height: 20px; width: 40px; border: 1px solid #2c2c2c; border-radius: 5px; background: linear-gradient(90deg, #555 0 8px, #8f8f8f 8px); line-height: 18px; padding-left: 13px; }
.rc-cb { margin: 1px 0 0 11px; }
.rc-bracket { margin: 82px 0 0 8px; height: 20px; width: 40px; border: 1px solid #2c2c2c; border-radius: 5px; background: linear-gradient(90deg, #555 0 8px, #5e5e5e 8px); line-height: 18px; padding-left: 6px; color: #ddd; }

.wall-bottom { height: 5px; flex: none; background: linear-gradient(90deg, #060718, #0a0a24 50%, #10102c); }

/* Menus */
.menu { position: absolute; background: rgba(20,20,20,.9); border-radius: 5px; color: #e8e8e8; box-shadow: 0 1px 6px rgba(0,0,0,.35); z-index: 2; }
.menu-main { left: 148px; top: 440px; width: 176px; padding-top: 5px; height: 441px; border-radius: 6px 6px 0 0; }
.menu-sub { left: 323px; top: 557px; width: 175px; height: 384px; z-index: 3; }
.mi { height: 20px; display: flex; align-items: center; padding: 1px 6px 0 21px; white-space: nowrap; position: relative; }
.menu-sub .mi { padding-left: 20px; }
.mi span { flex: 1; }
.mi em { text-align: right; }
.mi.arrow { padding-right: 5px; }
.mi.arrow::after { content: ""; width: 0; height: 0; border-block: 5px solid transparent; border-left: 6px solid #7e7e7e; margin-left: 6px; flex: none; }
.menu-sub .mi.arrow::after { margin-right: -1px; }
.mi.hl { background: linear-gradient(#7ea6e2, #4d7cc6) 0 0 / 100% 18px no-repeat; color: #0c0c0c; }
.mi.hl.arrow::after { border-left-color: #cfdcf0; }
.msep { height: 6px; position: relative; }
.msep::after { content: ""; position: absolute; left: 0; right: 0; top: 2px; height: 1px; background: #2a2a2a; }
.mcheck { position: absolute; left: 5px; top: 4px; width: 9px; height: 9px; background: #5a5a5a; border: 1px solid #2c2c2c; border-radius: 2px; }
```
FILE: grid.js
```js
// Perspective floor grid: two pencils of lines through the scene's vanishing points.
(function () {
  var NS = 'http://www.w3.org/2000/svg';
  var grid = document.getElementById('grid');
  var axes = document.getElementById('axes');
  var ts = [2.3, 3.15, 4, 4.85, 5.7, 6.55, 7.4, 8.2, 9, 9.75, 10.45, 11.2];
  var ss = [-2.2, -1.88, -1.51, -1.14, -0.79, -0.44, -0.09, 0.287, 0.653, 1.025, 1.4, 1.79, 2.18, 2.57, 2.98, 3.38, 3.78, 4.18];
  var S_MAX = 4.18, T_MAX = 11.2;

  function crossY(s, t) { return (2395 + 65 * s + 76 * t) / (s + t); }
  function add(parent, x1, y1, x2, y2, colour) {
    var l = document.createElementNS(NS, 'line');
    l.setAttribute('x1', x1); l.setAttribute('y1', y1);
    l.setAttribute('x2', x2); l.setAttribute('y2', y2);
    if (colour) l.setAttribute('stroke', colour);
    parent.appendChild(l);
  }
  ts.forEach(function (t) {
    var y1 = crossY(S_MAX, t), x1 = 505 + S_MAX * (y1 - 65);
    var y2 = 76 + 3000 / t, x2 = 2900 - t * (y2 - 76);
    if (t === 4.85) add(axes, 1626, 334, x2, y2, '#1f7d1f');
    else add(grid, x1, y1, x2, y2);
  });
  ss.forEach(function (s) {
    var y1 = crossY(s, T_MAX), x1 = 505 + s * (y1 - 65);
    var y2 = 900, x2 = 505 + s * (y2 - 65);
    if (s === 1.025) {
      var yo = crossY(s, 4.85);
      add(grid, x1, y1, 505 + s * (yo - 65), yo);
      add(axes, 505 + s * (yo - 65), yo, x2, y2, '#6a2c2c');
    } else add(grid, x1, y1, x2, y2);
  });
})();
```
